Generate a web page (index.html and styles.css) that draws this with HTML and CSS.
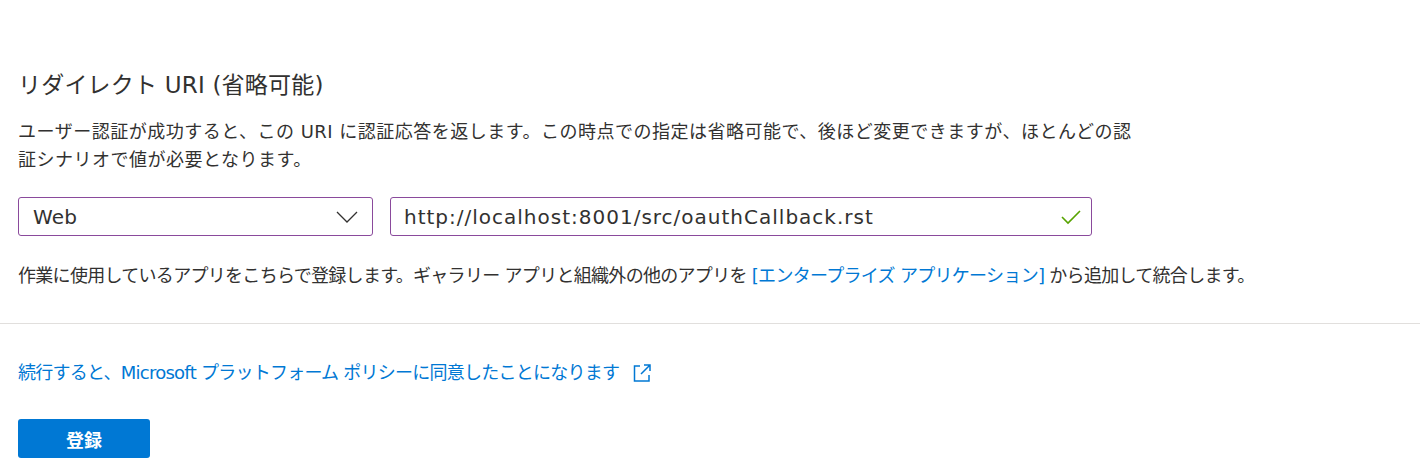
FILE: index.html
```html
<!DOCTYPE html>
<html lang="ja">
<head>
<meta charset="utf-8">
<title>リダイレクト URI</title>
<link rel="stylesheet" href="styles.css">
</head>
<body>
<div class="page">
  <section class="section">
    <h2 class="title">リダイレクト URI (省略可能)</h2>
    <p class="desc">ユーザー認証が成功すると、この URI に認証応答を返します。この時点での指定は省略可能で、後ほど変更できますが、ほとんどの認<br>証シナリオで値が必要となります。</p>
    <div class="row">
      <div class="select">
        <span class="select-value">Web</span>
        <svg class="chev" width="22" height="12" viewBox="0 0 22 12"><path d="M1 1 L11 11 L21 1" fill="none" stroke="#323130" stroke-width="1.3"/></svg>
      </div>
      <div class="input">
        <span class="input-value">http://localhost:8001/src/oauthCallback.rst</span>
        <svg class="check" width="20" height="16" viewBox="0 0 20 16"><path d="M1 8 L7 14 L19 2" fill="none" stroke="#57a300" stroke-width="1.6"/></svg>
      </div>
    </div>
    <p class="info">作業に使用しているアプリをこちらで登録します。ギャラリー アプリと組織外の他のアプリを <a class="link" href="#">[エンタープライズ アプリケーション]</a> から追加して統合します。</p>
  </section>
  <hr class="divider">
  <section class="section footer">
    <a class="policy" href="#">続行すると、Microsoft プラットフォーム ポリシーに同意したことになります<svg class="ext" width="20" height="20" viewBox="0 0 20 20"><path d="M8 3 H2.5 V18 H17 V12" fill="none" stroke="#0078d4" stroke-width="1.5"/><path d="M9 11 L18 2 M12 2 H18 V8" fill="none" stroke="#0078d4" stroke-width="1.5"/></svg></a>
    <div class="actions"><button class="btn">登録</button></div>
  </section>
</div>
</body>
</html>
```

FILE: styles.css
```css
html, body {
  margin: 0;
  padding: 0;
  background: #ffffff;
}
body {
  font-family: "DejaVu Sans", "Noto Sans CJK JP", sans-serif;
  color: #323130;
  font-size: 18px;
}
.page {
  padding-top: 69px;
}
.section {
  padding: 0 18px;
}
.title {
  margin: 0;
  font-size: 23px;
  font-weight: 400;
  line-height: 32px;
  letter-spacing: 0.2px;
  color: #323130;
}
.desc {
  margin: 17px 0 0;
  line-height: 28px;
  font-size: 18px;
  letter-spacing: 0.5px;
}
.row {
  display: flex;
  gap: 17px;
  margin-top: 23px;
}
.select, .input {
  box-sizing: border-box;
  height: 39px;
  border: 1px solid #8a4a9c;
  border-radius: 3px;
  display: flex;
  align-items: center;
  justify-content: space-between;
}
.select {
  width: 355px;
  padding: 0 14px 0 14px;
}
.input {
  width: 702px;
  padding: 0 10px 0 13px;
}
.select-value, .input-value {
  font-size: 20px;
  letter-spacing: 1px;
  color: #323130;
}
.select-value {
  letter-spacing: 0.2px;
}
.chev {
  display: block;
}
.check {
  display: block;
}
.info {
  margin: 26px 0 0;
  line-height: 28px;
  font-size: 18px;
  letter-spacing: -0.7px;
}
.link {
  color: #0078d4;
  text-decoration: none;
}
.divider {
  margin: 33px 0 0;
  border: 0;
  border-top: 1px solid #e1dfdd;
  height: 0;
}
.footer {
  padding-top: 35px;
}
.policy {
  display: inline-flex;
  align-items: center;
  gap: 13px;
  color: #0078d4;
  text-decoration: none;
  font-size: 18px;
  line-height: 28px;
  letter-spacing: -0.75px;
}
.ext {
  display: block;
}
.actions {
  margin-top: 32px;
}
.btn {
  width: 132px;
  height: 39px;
  background: #0078d4;
  color: #ffffff;
  border: 0;
  border-radius: 3px;
  font-family: "Noto Sans CJK JP", sans-serif;
  font-size: 18px;
  font-weight: 700;
  padding: 0;
}
```
